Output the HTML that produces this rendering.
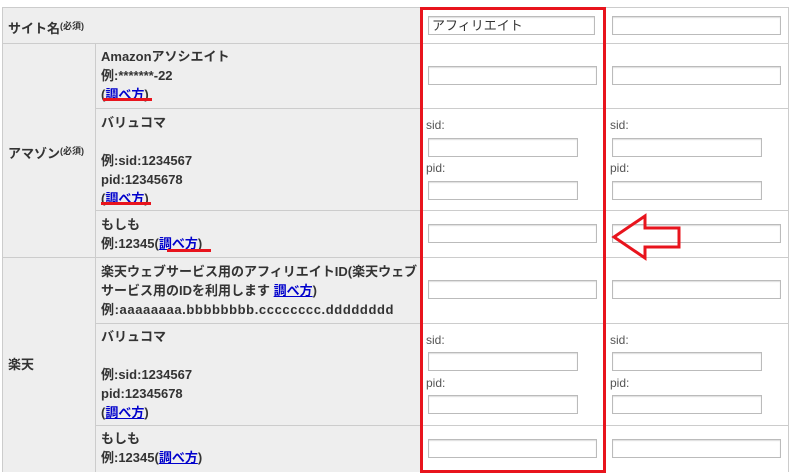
<!DOCTYPE html>
<html><head><meta charset="utf-8"><style>
body{margin:0;width:800px;height:472px;overflow:hidden;background:#fff;position:relative;font-family:"Liberation Sans","Noto Sans CJK JP",sans-serif;}
div,span{position:absolute;}
.g{background:#eee;}
.h{background:#ccc;height:1px;}
.v{background:#ccc;width:1px;}
.t{font-size:13px;font-weight:bold;color:#333;line-height:19px;white-space:nowrap;}
.in{border:1px solid #bbb;background:#fff;height:17px;box-shadow:inset 0 1px 1px #ddd;}
.l{font-size:12px;color:#555;}
a{color:#00c;text-decoration:underline;}
.ru{background:#e8141d;height:3px;}
.sup{font-size:9px;vertical-align:4px;}
</style></head><body>
<div class="g" style="left:2px;top:7px;width:419px;height:465px"></div>
<div class="h" style="left:2px;top:7px;width:786px"></div>
<div class="h" style="left:2px;top:43px;width:786px"></div>
<div class="h" style="left:95px;top:108px;width:693px"></div>
<div class="h" style="left:95px;top:210px;width:693px"></div>
<div class="h" style="left:2px;top:257px;width:786px"></div>
<div class="h" style="left:95px;top:323px;width:693px"></div>
<div class="h" style="left:95px;top:425px;width:693px"></div>
<div class="v" style="left:2px;top:7px;height:465px"></div>
<div class="v" style="left:95px;top:43px;height:429px"></div>
<div class="v" style="left:420px;top:7px;height:465px"></div>
<div class="v" style="left:603px;top:7px;height:465px"></div>
<div class="v" style="left:788px;top:7px;height:465px"></div>

<div class="t" style="left:8px;top:17px">サイト名<span class="sup" style="position:static">(必須)</span></div>
<div class="t" style="left:8px;top:142px">アマゾン<span class="sup" style="position:static">(必須)</span></div>
<div class="t" style="left:8px;top:355px">楽天</div>

<div class="t" style="left:101px;top:47px">Amazonアソシエイト<br>例:*******-22<br>(<a>調べ方</a>)</div>
<div class="ru" style="left:103px;top:98px;width:49px"></div>
<div class="t" style="left:101px;top:113px">バリュコマ<br><br>例:sid:1234567<br>pid:12345678<br>(<a>調べ方</a>)</div>
<div class="ru" style="left:101px;top:202px;width:50px"></div>
<div class="t" style="left:101px;top:215px">もしも<br>例:12345(<a>調べ方</a>)</div>
<div class="ru" style="left:167px;top:249px;width:44px"></div>

<div class="t" style="left:101px;top:262px">楽天ウェブサービス用のアフィリエイトID(楽天ウェブ<br>サービス用のIDを利用します <a>調べ方</a>)<br><span style="position:static;letter-spacing:0.6px">例:aaaaaaaa.bbbbbbbb.cccccccc.dddddddd</span></div>
<div class="t" style="left:101px;top:327px">バリュコマ<br><br>例:sid:1234567<br>pid:12345678<br>(<a>調べ方</a>)</div>
<div class="t" style="left:101px;top:429px">もしも<br>例:12345(<a>調べ方</a>)</div>

<div class="in" style="left:428px;top:16px;width:167px;font-size:13px;color:#333;line-height:17px;padding-left:3px;box-sizing:border-box;height:19px">アフィリエイト</div>
<div class="in" style="left:612px;top:16px;width:167px"></div>
<div class="in" style="left:428px;top:66px;width:167px"></div>
<div class="in" style="left:612px;top:66px;width:167px"></div>
<div class="l" style="left:426px;top:118px">sid:</div><div class="l" style="left:610px;top:118px">sid:</div>
<div class="in" style="left:428px;top:138px;width:148px"></div><div class="in" style="left:612px;top:138px;width:148px"></div>
<div class="l" style="left:426px;top:161px">pid:</div><div class="l" style="left:610px;top:161px">pid:</div>
<div class="in" style="left:428px;top:181px;width:148px"></div><div class="in" style="left:612px;top:181px;width:148px"></div>
<div class="in" style="left:428px;top:224px;width:167px"></div>
<div class="in" style="left:612px;top:224px;width:167px"></div>
<div class="in" style="left:428px;top:280px;width:167px"></div>
<div class="in" style="left:612px;top:280px;width:167px"></div>
<div class="l" style="left:426px;top:333px">sid:</div><div class="l" style="left:610px;top:333px">sid:</div>
<div class="in" style="left:428px;top:352px;width:148px"></div><div class="in" style="left:612px;top:352px;width:148px"></div>
<div class="l" style="left:426px;top:376px">pid:</div><div class="l" style="left:610px;top:376px">pid:</div>
<div class="in" style="left:428px;top:395px;width:148px"></div><div class="in" style="left:612px;top:395px;width:148px"></div>
<div class="in" style="left:428px;top:439px;width:167px"></div>
<div class="in" style="left:612px;top:439px;width:167px"></div>

<div style="left:420px;top:7px;width:180px;height:460px;border:3px solid #e8141d"></div>
<svg style="position:absolute;left:0;top:0" width="800" height="472"><polygon points="614,237 645,216 645,228 679,228 679,247 645,247 645,258" fill="none" stroke="#e8141d" stroke-width="3" stroke-linejoin="miter"/></svg>
</body></html>
